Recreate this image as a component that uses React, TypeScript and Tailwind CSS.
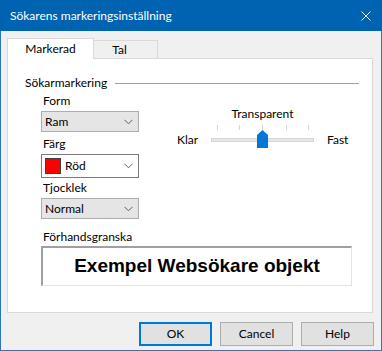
import React from "react";

const font = { fontFamily: "Lato, 'Noto Sans', sans-serif" };

function Chevron() {
  return (
    <svg width="9" height="6" viewBox="0 0 9 6" className="block">
      <path d="M0.5 0.8 L4.5 4.8 L8.5 0.8" fill="none" stroke="#606060" strokeWidth="1" />
    </svg>
  );
}

function Combo({ children, white }: { children: React.ReactNode; white?: boolean }) {
  return (
    <div
      className={
        white
          ? "flex h-[24px] w-[98px] items-center justify-between border border-[#7a7a7a] bg-white pl-[3px] pr-[5px]"
          : "flex h-[21px] w-[98px] items-center justify-between border border-[#adadad] bg-[#e5e5e5] pl-[3px] pr-[5px]"
      }
    >
      <div className="flex items-center gap-[4px] text-[12px] leading-[14px] text-black">{children}</div>
      <Chevron />
    </div>
  );
}

function Btn({ label, def }: { label: string; def?: boolean }) {
  return (
    <div
      className={
        def
          ? "flex h-[24px] w-[73px] items-center justify-center border-2 border-[#0078d7] bg-[#e1e1e1] text-[12px] text-black"
          : "flex h-[24px] w-[73px] items-center justify-center border border-[#adadad] bg-[#e1e1e1] text-[12px] text-black"
      }
    >
      {label}
    </div>
  );
}

export default function App() {
  return (
    <div
      style={font}
      className="flex h-[351px] w-[382px] flex-col border-x border-b border-[#2a77c0] bg-[#f0f0f0]"
    >
      {/* Title bar */}
      <div className="-mx-px flex h-[31px] items-center justify-between bg-[#0063b1] pl-[10px] pr-[10px]">
        <span className="text-[12px] text-white">Sökarens markeringsinställning</span>
        <svg width="10" height="10" viewBox="0 0 10 10" className="mr-[1px]">
          <path d="M0.5 0.5 L9.5 9.5 M9.5 0.5 L0.5 9.5" stroke="white" strokeWidth="1" />
        </svg>
      </div>

      {/* Tabs */}
      <div className="flex pl-[6px] pt-[7px]">
        <div className="relative z-10 -mb-px flex h-[21px] w-[87px] items-center justify-center border-x border-t border-[#d9d9d9] bg-white text-[12px] text-black">
          Markerad
        </div>
        <div className="mt-[2px] flex h-[18px] w-[64px] items-center justify-center border-r border-t border-[#d9d9d9] bg-[#f0f0f0] pr-[12px] text-[12px] text-black">
          Tal
        </div>
      </div>

      {/* Panel */}
      <div className="ml-[6px] h-[255px] w-[366px] border border-[#d9d9d9] bg-white pl-[17px] pr-[13px] pt-[17px]">
        <div className="flex h-[14px] items-center">
          <span className="text-[12px] leading-[14px] text-black">Sökarmarkering</span>
          <div className="ml-[8px] h-px flex-1 bg-[#a0a0a0]" />
        </div>

        <div className="mt-[4px] flex pl-[16px]">
          {/* Left column */}
          <div className="flex w-[98px] flex-col">
            <span className="pl-[2px] text-[12px] leading-[14px] text-black">Form</span>
            <div className="mt-[3px]">
              <Combo>Ram</Combo>
            </div>
            <span className="mt-[5px] pl-[2px] text-[12px] leading-[14px] text-black">Färg</span>
            <div className="mt-[3px]">
              <Combo white>
                <div className="h-[16px] w-[16px] border border-[#404040] bg-[#ff0000]" />
                <span>Röd</span>
              </Combo>
            </div>
            <span className="mt-[3px] pl-[2px] text-[12px] leading-[14px] text-black">Tjocklek</span>
            <div className="mt-[3px]">
              <Combo>Normal</Combo>
            </div>
          </div>

          {/* Right column: slider */}
          <div className="ml-[38px] flex flex-col pt-[13px]">
            <div className="flex items-end">
              <span className="mb-[1px] w-[34px] text-[12px] leading-[14px] text-black">Klar</span>
              <div className="flex w-[103px] flex-col items-center">
                <span className="text-[12px] leading-[14px] text-black">Transparent</span>
                <div className="relative h-[27px] w-[103px]">
                  <div className="absolute left-[6px] top-[4px] h-[5px] w-px bg-[#d4d4d4]" />
                  <div className="absolute left-[28px] top-[4px] h-[5px] w-px bg-[#d4d4d4]" />
                  <div className="absolute left-[51px] top-[4px] h-[5px] w-px bg-[#d4d4d4]" />
                  <div className="absolute left-[75px] top-[4px] h-[5px] w-px bg-[#d4d4d4]" />
                  <div className="absolute left-[97px] top-[4px] h-[5px] w-px bg-[#d4d4d4]" />
                  <div className="absolute left-0 top-[17px] h-[4px] w-[103px] border border-[#d6d6d6] bg-[#e7e7e7]" />
                  <svg
                    width="11"
                    height="18"
                    viewBox="0 0 11 18"
                    className="absolute left-[46px] top-[9px]"
                  >
                    <path d="M0 5 L5.5 0 L11 5 L11 18 L0 18 Z" fill="#0078d7" />
                  </svg>
                </div>
              </div>
              <span className="mb-[1px] ml-[13px] text-[12px] leading-[14px] text-black">Fast</span>
            </div>
          </div>
        </div>

        {/* Preview */}
        <div className="mt-[11px] pl-[16px]">
          <span className="block pl-[2px] text-[12px] leading-[14px] text-black">Förhandsgranska</span>
          <div className="mt-[2px] flex h-[40px] w-[311px] items-center justify-center border-b border-l-2 border-r border-t-2 border-b-[#e3e3e3] border-l-[#a0a0a0] border-r-[#e3e3e3] border-t-[#a0a0a0] bg-white">
            <span
              className="text-[19px] font-bold text-black"
              style={{ fontFamily: "'Liberation Sans', Arial, sans-serif" }}
            >
              Exempel Websökare objekt
            </span>
          </div>
        </div>
      </div>

      {/* Buttons */}
      <div className="mt-[9px] flex justify-end gap-[8px] pr-[7px]">
        <Btn label="OK" def />
        <Btn label="Cancel" />
        <Btn label="Help" />
      </div>
    </div>
  );
}
